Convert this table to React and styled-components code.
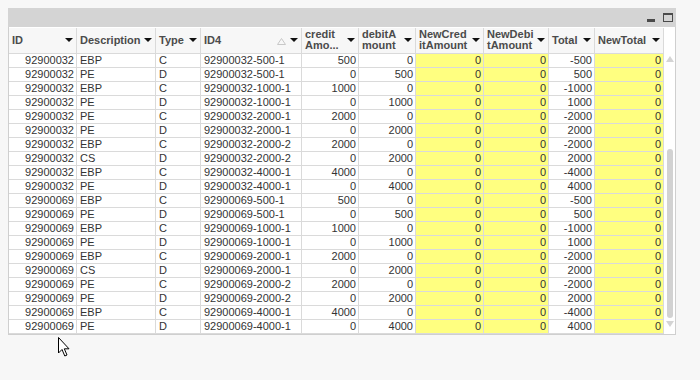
import React from 'react';
import styled, { createGlobalStyle } from 'styled-components';

const GlobalStyle = createGlobalStyle`
  body {
    margin: 0;
    background: #f7f7f7;
    font-family: 'Liberation Sans', Arial, sans-serif;
  }
`;

const columns = [
  { key: 'id', label: 'ID', width: 68, align: 'right' },
  { key: 'desc', label: 'Description', width: 79 },
  { key: 'type', label: 'Type', width: 45 },
  { key: 'id4', label: 'ID4', width: 101, sorted: true },
  { key: 'credit', label: ['credit', 'Amo...'], width: 57, align: 'right' },
  { key: 'debit', label: ['debitA', 'mount'], width: 57, align: 'right' },
  { key: 'newCredit', label: ['NewCred', 'itAmount'], width: 68, align: 'right', yellow: true },
  { key: 'newDebit', label: ['NewDebi', 'tAmount'], width: 65, align: 'right', yellow: true },
  { key: 'total', label: 'Total', width: 46, align: 'right' },
  { key: 'newTotal', label: 'NewTotal', width: 69, align: 'right', yellow: true },
];

const base = [
  ['EBP', 'C', '500-1', 500],
  ['PE', 'D', '500-1', 500],
  ['EBP', 'C', '1000-1', 1000],
  ['PE', 'D', '1000-1', 1000],
  ['PE', 'C', '2000-1', 2000],
  ['PE', 'D', '2000-1', 2000],
  ['EBP', 'C', '2000-2', 2000],
  ['CS', 'D', '2000-2', 2000],
  ['EBP', 'C', '4000-1', 4000],
  ['PE', 'D', '4000-1', 4000],
];

const second = [
  ['EBP', 'C', '500-1', 500],
  ['PE', 'D', '500-1', 500],
  ['EBP', 'C', '1000-1', 1000],
  ['PE', 'D', '1000-1', 1000],
  ['EBP', 'C', '2000-1', 2000],
  ['CS', 'D', '2000-1', 2000],
  ['PE', 'C', '2000-2', 2000],
  ['PE', 'D', '2000-2', 2000],
  ['EBP', 'C', '4000-1', 4000],
  ['PE', 'D', '4000-1', 4000],
];

const toRow = (id) => ([desc, type, suffix, amt]) => ({
  id,
  desc,
  type,
  id4: `${id}-${suffix}`,
  credit: type === 'C' ? amt : 0,
  debit: type === 'D' ? amt : 0,
  newCredit: 0,
  newDebit: 0,
  total: type === 'C' ? -amt : amt,
  newTotal: 0,
});

const rows = [...base.map(toRow('92900032')), ...second.map(toRow('92900069'))];

const template = columns.map((c) => `${c.width}px`).join(' ');

const App = () => {
  return (
    <Page>
      <GlobalStyle />
      <Panel>
        <TitleBar>
          <Minimize />
          <Maximize />
        </TitleBar>
        <Body>
          <Grid $template={template}>
            {columns.map((c) => (
              <HeadCell key={c.key}>
                <HeadLabel>
                  {Array.isArray(c.label)
                    ? c.label.map((l) => <span key={l}>{l}</span>)
                    : c.label}
                </HeadLabel>
                {c.sorted && (
                  <SortMark viewBox='0 0 9 7' width='9' height='7'>
                    <path d='M4.5 0.5 L8.5 6.5 L0.5 6.5 Z' fill='none' stroke='#c8c8c8' strokeWidth='1' />
                  </SortMark>
                )}
                <DropArrow />
              </HeadCell>
            ))}
            {rows.map((r, i) =>
              columns.map((c) => (
                <Cell key={`${i}-${c.key}`} $align={c.align} $yellow={c.yellow}>
                  {r[c.key]}
                </Cell>
              ))
            )}
          </Grid>
          <ScrollBar>
            <ScrollArrow $up />
            <Thumb />
            <ScrollArrow />
          </ScrollBar>
        </Body>
      </Panel>
      <Cursor viewBox='0 0 12 20' width='12' height='20'>
        <path
          d='M0.5 0.5 L0.5 16 L4 12.5 L6.8 19 L9 18 L6.3 11.8 L11 11.8 Z'
          fill='#fff'
          stroke='#000'
          strokeWidth='1'
          strokeLinejoin='miter'
        />
      </Cursor>
    </Page>
  );
};

const Page = styled.div`
  position: relative;
  width: 700px;
  height: 380px;
  padding: 8px 0 0 8px;
  box-sizing: border-box;
`;

const Panel = styled.div`
  width: 668px;
  border: 1px solid #cfcfcf;
  border-top: none;
  box-sizing: border-box;
  background: #fff;
`;

const TitleBar = styled.div`
  height: 19px;
  margin: 0 -1px;
  background: #d4d4d4;
  display: flex;
  align-items: flex-end;
  justify-content: flex-end;
  gap: 8px;
  padding: 0 3px 5px 0;
  box-sizing: border-box;
`;

const Minimize = styled.div`
  width: 8px;
  height: 3px;
  background: #4a4a4a;
`;

const Maximize = styled.div`
  width: 10px;
  height: 9px;
  border: 1px solid #4a4a4a;
  border-top-width: 2px;
  box-sizing: border-box;
`;

const Body = styled.div`
  display: flex;
  margin-top: 1px;
`;

const Grid = styled.div`
  display: grid;
  grid-template-columns: ${(p) => p.$template};
  grid-auto-rows: 14px;
  grid-template-rows: 26px;
`;

const HeadCell = styled.div`
  display: flex;
  align-items: center;
  padding: 0 3px 0 3px;
  background: #f7f7f7;
  border-right: 1px solid #dadada;
  border-bottom: 1px solid #dadada;
  box-sizing: border-box;
  color: #4b4b4b;
  font-weight: bold;
  font-size: 11px;
  overflow: hidden;
`;

const HeadLabel = styled.div`
  flex: 1;
  display: flex;
  flex-direction: column;
  line-height: 11px;
  white-space: nowrap;
  margin-top: -1px;
`;

const SortMark = styled.svg`
  margin: 2px 4px 0 0;
`;

const DropArrow = styled.div`
  width: 0;
  height: 0;
  border-left: 4px solid transparent;
  border-right: 4px solid transparent;
  border-top: 4px solid #111;
  margin-bottom: 1px;
`;

const Cell = styled.div`
  font-size: 11px;
  line-height: 13px;
  color: #333;
  padding: 0 2px 0 3px;
  text-align: ${(p) => p.$align || 'left'};
  background: ${(p) => (p.$yellow ? '#ffff80' : '#fff')};
  border-right: 1px solid #dadada;
  border-bottom: 1px solid #dadada;
  box-sizing: border-box;
  white-space: nowrap;
  overflow: hidden;
`;

const ScrollBar = styled.div`
  width: 11px;
  display: flex;
  flex-direction: column;
  align-items: center;
  padding-top: 28px;
  box-sizing: border-box;
`;

const ScrollArrow = styled.div`
  width: 0;
  height: 0;
  border-left: 4px solid transparent;
  border-right: 4px solid transparent;
  ${(p) =>
    p.$up
      ? 'border-bottom: 6px solid #d4d4d4; margin-bottom: 87px;'
      : 'border-top: 6px solid #d4d4d4; margin-top: 3px;'}
`;

const Thumb = styled.div`
  width: 6px;
  height: 169px;
  border-radius: 3px;
  background: #d2d2d2;
`;

const Cursor = styled.svg`
  position: absolute;
  left: 58px;
  top: 337px;
`;

export default App;
